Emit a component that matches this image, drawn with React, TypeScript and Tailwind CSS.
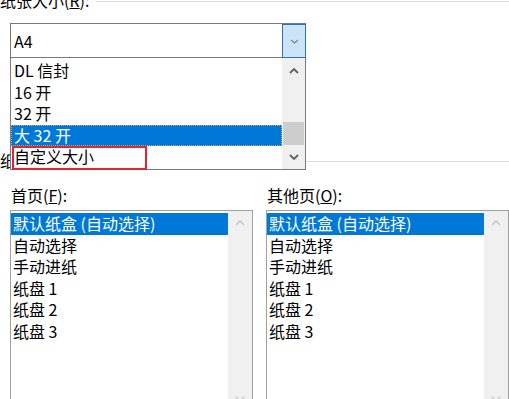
import React from "react";

const sizes = ["DL 信封", "16 开", "32 开", "大 32 开", "自定义大小"];
const trays = ["默认纸盒 (自动选择)", "自动选择", "手动进纸", "纸盘 1", "纸盘 2", "纸盘 3"];

function Chevron({ dir, w = 10, h = 6, stroke = 1.8 }: { dir: "up" | "down"; w?: number; h?: number; stroke?: number }) {
  const pts = dir === "up" ? `1,${h - 1} ${w / 2},1 ${w - 1},${h - 1}` : `1,1 ${w / 2},${h - 1} ${w - 1},1`;
  return (
    <svg width={w} height={h} viewBox={`0 0 ${w} ${h}`} fill="none">
      <polyline points={pts} stroke="currentColor" strokeWidth={stroke} />
    </svg>
  );
}

function TrayList() {
  return (
    <div className="mt-[4px] flex h-[202px] w-[243px] border border-[#a0a0a0] bg-white">
      <ul className="flex-1 pt-[2px]">
        {trays.map((t, i) => (
          <li
            key={t}
            className={`h-[21.6px] whitespace-nowrap pl-[2px] leading-[21.6px] ${i === 0 ? "bg-[#0078d7] text-white" : ""}`}
          >
            {t}
          </li>
        ))}
      </ul>
      <div className="flex w-[24px] flex-col justify-between bg-[#f0f0f0] text-[#c4c4c4]">
        <div className="flex h-[24px] items-center justify-center">
          <Chevron dir="up" stroke={1.5} />
        </div>
        <div className="flex h-[24px] items-center justify-center">
          <Chevron dir="down" stroke={1.5} />
        </div>
      </div>
    </div>
  );
}

export default function App() {
  return (
    <div className="relative h-[399px] w-[509px] overflow-hidden bg-white font-['Noto_Sans_CJK_SC','Noto_Sans',sans-serif] text-[16px] text-black">
      {/* 纸张大小 */}
      <div className="-mt-[11px] flex items-start">
        <span className="whitespace-nowrap leading-[22px]">
          纸张大小(<span className="underline">R</span>):
        </span>
        <div className="ml-[7px] mt-[12px] h-px flex-1 bg-[#dcdcdc]" />
      </div>

      <div className="relative z-10 ml-[10px] mt-[12px] w-[296px]">
        <div className="flex h-[35px] border border-[#7a7a7a] bg-white">
          <span className="flex-1 self-center pl-[3px]">A4</span>
          <div className="-mb-px -mr-px flex w-[24px] items-center justify-center border border-[#2e72b8] bg-[#cce4f7] text-[#6b86a3]">
            <Chevron dir="down" w={9} h={5} stroke={1.2} />
          </div>
        </div>

        {/* open dropdown */}
        <div className="absolute left-0 top-full flex h-[112px] w-full border border-t-0 border-[#7a7a7a] bg-white">
          <ul className="flex-1 pt-[2px]">
            {sizes.map((s, i) => (
              <li
                key={s}
                className={`h-[21.6px] whitespace-nowrap pl-[3px] leading-[21.6px] ${
                  i === 3 ? "bg-[#0078d7] text-white outline-1 -outline-offset-1 outline-dotted outline-[#d9a066]" : ""
                }`}
              >
                {s}
              </li>
            ))}
          </ul>
          <div className="flex w-[23px] flex-col bg-[#f0f0f0] text-[#606060]">
            <div className="flex h-[25px] items-center justify-center">
              <Chevron dir="up" />
            </div>
            <div className="flex flex-1 flex-col justify-end">
              <div className="mx-px h-[23px] bg-[#cdcdcd]" />
            </div>
            <div className="flex h-[24px] items-center justify-center">
              <Chevron dir="down" />
            </div>
          </div>
          <div className="pointer-events-none absolute left-[0.5px] top-[87.7px] h-[24.3px] w-[135px] border-2 border-[#e5232f]" />
        </div>
      </div>

      {/* 纸张来源 */}
      <div className="mt-[91px] flex items-start">
        <span className="whitespace-nowrap leading-[22px]">纸张来源</span>
        <div className="ml-[7px] mt-[12px] h-px flex-1 bg-[#dcdcdc]" />
      </div>

      <div className="mt-[13px] flex gap-[13px] pl-[10px]">
        <div className="flex flex-col">
          <span className="pl-px leading-[22px]">
            首页(<span className="underline">F</span>):
          </span>
          <TrayList />
        </div>
        <div className="flex flex-col">
          <span className="pl-px leading-[22px]">
            其他页(<span className="underline">O</span>):
          </span>
          <TrayList />
        </div>
      </div>
    </div>
  );
}
